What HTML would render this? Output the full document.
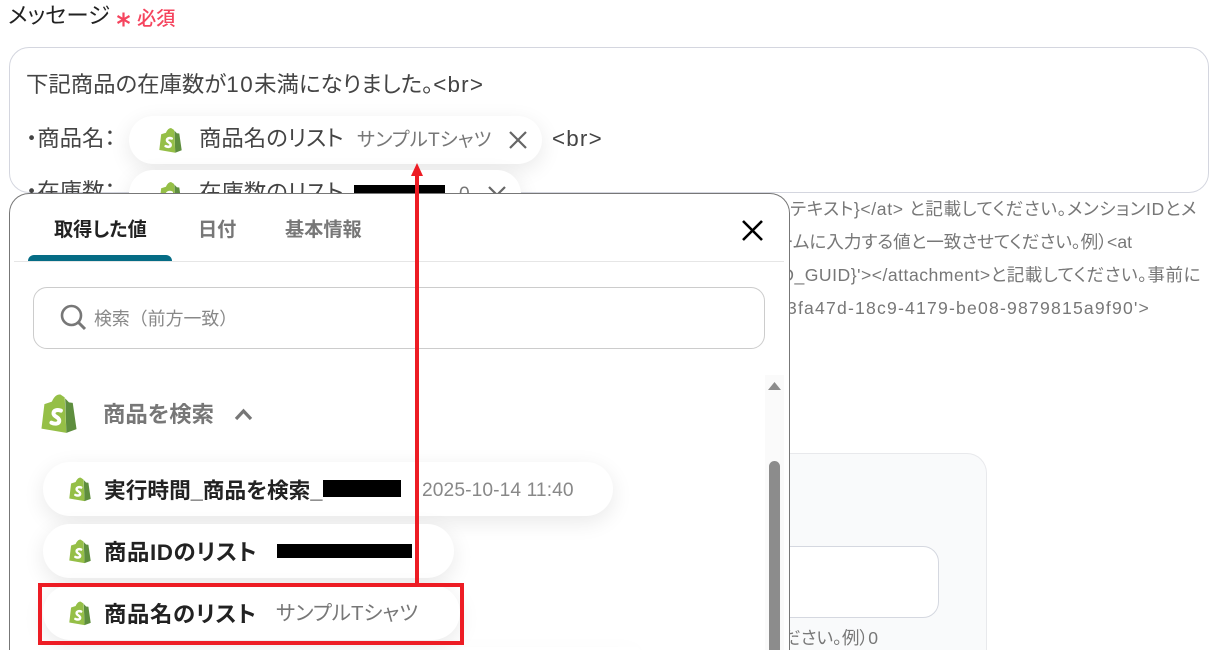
<!DOCTYPE html>
<html lang="ja"><head><meta charset="utf-8"><title>メッセージ</title>
<style>
html,body{margin:0;padding:0;background:#fff}
#p{position:relative;width:1218px;height:650px;overflow:hidden;background:#fff;font-family:"Liberation Sans","Noto Sans CJK JP",sans-serif;font-feature-settings:"palt"}
.t{position:absolute;white-space:nowrap;line-height:1}
.b{position:absolute;box-sizing:border-box}
.chip{position:absolute;background:#fff;border-radius:28px;box-shadow:0 6px 22px rgba(0,0,0,.09)}
.k{background:#000;position:absolute}
svg{position:absolute;overflow:visible}
</style></head><body><div id="p">
<svg width="0" height="0" style="position:absolute"><defs>
<symbol id="sh" viewBox="0 0 38 42">
<path fill="#95bf47" d="M25 4.500L20.500 1.500C17.500 1 14 3 11.500 9L3.600 11.600L0.500 37.500L26.800 42Z"/>
<path fill="#5e8e3e" d="M25.500 5.500L29.500 9.800L33.500 10.300L37.500 38L26.800 42Z"/>
<path fill="none" stroke="#95bf47" stroke-width="1.600" d="M13 11C13.500 6 17 2 20 3C22.500 4 22.800 7 22.800 9"/>
<path fill="none" stroke="#fff" stroke-width="4.200" stroke-linecap="round" d="M21 18.500C17 16.800 12.800 18.400 13.200 21.800C13.600 25 19.500 25.400 19.300 29.300C19.100 32.600 14.600 33 11 31.200"/>
</symbol></defs></svg>

<div class="t" style="left:8px;top:5px;font-size:22.400px;color:#222">メッセージ</div>
<svg style="left:116px;top:12px" width="15" height="15"><path d="M7.500 0.500V14.500M1.500 4L13.500 11M13.500 4L1.500 11" stroke="#f5445e" stroke-width="2.200" fill="none"/></svg>
<div class="t" style="left:137px;top:10px;font-size:19.200px;font-weight:500;color:#f5445e">必須</div>

<div class="b" style="left:9px;top:47px;width:1200px;height:146px;border:1px solid #d4d6df;border-radius:20px"></div>
<div class="t" style="left:26px;top:74px;font-size:22.400px;color:#444">下記商品の在庫数が<span style="letter-spacing:1.500px">10</span>未満になりました。<span style="letter-spacing:1.200px">&lt;br&gt;</span></div>
<div class="t" style="left:26px;top:128px;font-size:22.400px;color:#444">・商品名：</div>
<div class="chip" style="left:129px;top:116px;width:413px;height:48px"></div>
<svg style="left:159px;top:127px" width="23" height="26"><use href="#sh" width="23" height="26"/></svg>
<div class="t" style="left:199px;top:128px;font-size:22.400px;color:#444">商品名のリスト</div>
<div class="t" style="left:357px;top:131px;font-size:19.200px;letter-spacing:.2px;color:#777">サンプルTシャツ</div>
<svg style="left:508px;top:130px" width="20" height="20"><path d="M2 2L18 18M18 2L2 18" stroke="#666" stroke-width="2.200" fill="none"/></svg>
<div class="t" style="left:552px;top:128px;font-size:22.400px;letter-spacing:1.200px;color:#444">&lt;br&gt;</div>

<div class="t" style="left:26px;top:181px;font-size:22.400px;color:#444">・在庫数：</div>
<div class="chip" style="left:129px;top:170px;width:392px;height:48px"></div>
<svg style="left:159px;top:181px" width="23" height="26"><use href="#sh" width="23" height="26"/></svg>
<div class="t" style="left:199px;top:182px;font-size:22.400px;color:#444">在庫数のリスト</div>
<div class="k" style="left:354px;top:185px;width:91px;height:10px"></div>
<div class="t" style="left:459px;top:185px;font-size:19.200px;color:#777">0</div>
<svg style="left:487px;top:185px" width="20" height="20"><path d="M2 2L18 18M18 2L2 18" stroke="#666" stroke-width="2.200" fill="none"/></svg>

<div class="t" style="right:21px;top:201px;font-size:17.600px;letter-spacing:.62px;color:#777">テキスト}&lt;/at&gt; と記載してください。メンションIDとメ</div>
<div class="t" style="right:86px;top:234px;font-size:17.600px;color:#777">フォームに入力する値と一致させてください。例）&lt;at</div>
<div class="t" style="right:17px;top:267px;font-size:17.600px;letter-spacing:.5px;color:#777">{ID_GUID}'&gt;&lt;/attachment&gt;と記載してください。事前に</div>
<div class="t" style="right:68px;top:300px;font-size:17.600px;letter-spacing:1.200px;color:#777">d3fa47d-18c9-4179-be08-9879815a9f90'&gt;</div>

<div class="b" style="left:700px;top:453px;width:287px;height:197px;background:#f9fafb;border:1px solid #e8e9ec;border-bottom:none;border-radius:20px 20px 0 0"></div>
<div class="b" style="left:700px;top:546px;width:239px;height:72px;background:#fff;border:1px solid #d5d8e0;border-radius:16px"></div>
<div class="t" style="right:340px;top:630px;font-size:17.600px;color:#777">ください。例）0</div>

<div class="b" style="left:9px;top:193px;width:781px;height:457px;background:#fff;border:1.500px solid #777;border-bottom:none;border-radius:20px 20px 0 0"></div>

<div class="t" style="left:54px;top:221px;font-size:19.200px;font-weight:700;color:#222">取得した値</div>
<div class="t" style="left:198px;top:221px;font-size:19.200px;font-weight:700;color:#777">日付</div>
<div class="t" style="left:285px;top:221px;font-size:19.200px;font-weight:700;color:#777">基本情報</div>
<div class="b" style="left:14px;top:261px;width:770px;height:1px;background:#e6e6e6"></div>
<div class="b" style="left:28px;top:255px;width:144px;height:6px;background:#056c85;border-radius:6px 6px 0 0"></div>
<svg style="left:741px;top:219px" width="23" height="23"><path d="M2 2L21 21M21 2L2 21" stroke="#000" stroke-width="2.600" fill="none"/></svg>

<div class="b" style="left:33px;top:287px;width:732px;height:62px;border:1px solid #ccc;border-radius:14px"></div>
<svg style="left:60px;top:304px" width="26" height="26"><circle cx="11.500" cy="11.500" r="9.500" fill="none" stroke="#777" stroke-width="2.600"/><path d="M18.500 18.500L25 25" stroke="#777" stroke-width="3" fill="none"/></svg>
<div class="t" style="left:94px;top:311px;font-size:17.900px;font-feature-settings:normal;color:#888">検索（前方一致）</div>

<svg style="left:41px;top:393px" width="36" height="40"><use href="#sh" width="36" height="40"/></svg>
<div class="t" style="left:103px;top:404px;font-size:22.400px;font-weight:700;color:#777">商品を検索</div>
<svg style="left:234px;top:408px" width="19" height="13"><path d="M2 11L9.500 3L17 11" fill="none" stroke="#777" stroke-width="3.200"/></svg>

<div class="b" style="left:765px;top:375px;width:19px;height:275px;background:#fafafa"></div>
<svg style="left:768px;top:382px" width="13" height="8"><path d="M6.500 0L13 8H0Z" fill="#8c8c8c"/></svg>
<div class="b" style="left:769px;top:461px;width:11px;height:189px;background:#8c8c8c;border-radius:6px 6px 0 0"></div>

<div class="chip" style="left:43px;top:462px;width:570px;height:54px"></div>
<svg style="left:69px;top:476px" width="22" height="26"><use href="#sh" width="22" height="26"/></svg>
<div class="t" style="left:104px;top:480px;font-size:21.700px;font-weight:700;color:#222">実行時間_商品を検索_</div>
<div class="k" style="left:323px;top:480px;width:78px;height:17px"></div>
<div class="t" style="left:422px;top:481px;font-size:19.200px;letter-spacing:.1px;color:#888">2025-10-14 11:40</div>

<div class="chip" style="left:43px;top:524px;width:411px;height:54px"></div>
<svg style="left:69px;top:538px" width="22" height="26"><use href="#sh" width="22" height="26"/></svg>
<div class="t" style="left:104px;top:542px;font-size:22.400px;letter-spacing:.6px;font-weight:700;color:#222">商品IDのリスト</div>
<div class="k" style="left:277px;top:544px;width:135px;height:14px"></div>

<div class="chip" style="left:43px;top:647px;width:597px;height:3px;border-radius:3px 3px 0 0"></div>
<div class="chip" style="left:43px;top:585px;width:417px;height:55px"></div>
<svg style="left:69px;top:600px" width="22" height="26"><use href="#sh" width="22" height="26"/></svg>
<div class="t" style="left:104px;top:604px;font-size:22.400px;letter-spacing:.6px;font-weight:700;color:#222">商品名のリスト</div>
<div class="t" style="left:276px;top:604px;font-size:20.500px;color:#777">サンプルTシャツ</div>

<div class="b" style="left:38px;top:583px;width:426px;height:62px;border:4px solid #ed1c24"></div>
<div class="b" style="left:415px;top:174px;width:4px;height:410px;background:#ed1c24"></div>
<svg style="left:411px;top:163px" width="12" height="13"><path d="M6 0L12 13H0Z" fill="#ed1c24"/></svg>
</div></body></html>
